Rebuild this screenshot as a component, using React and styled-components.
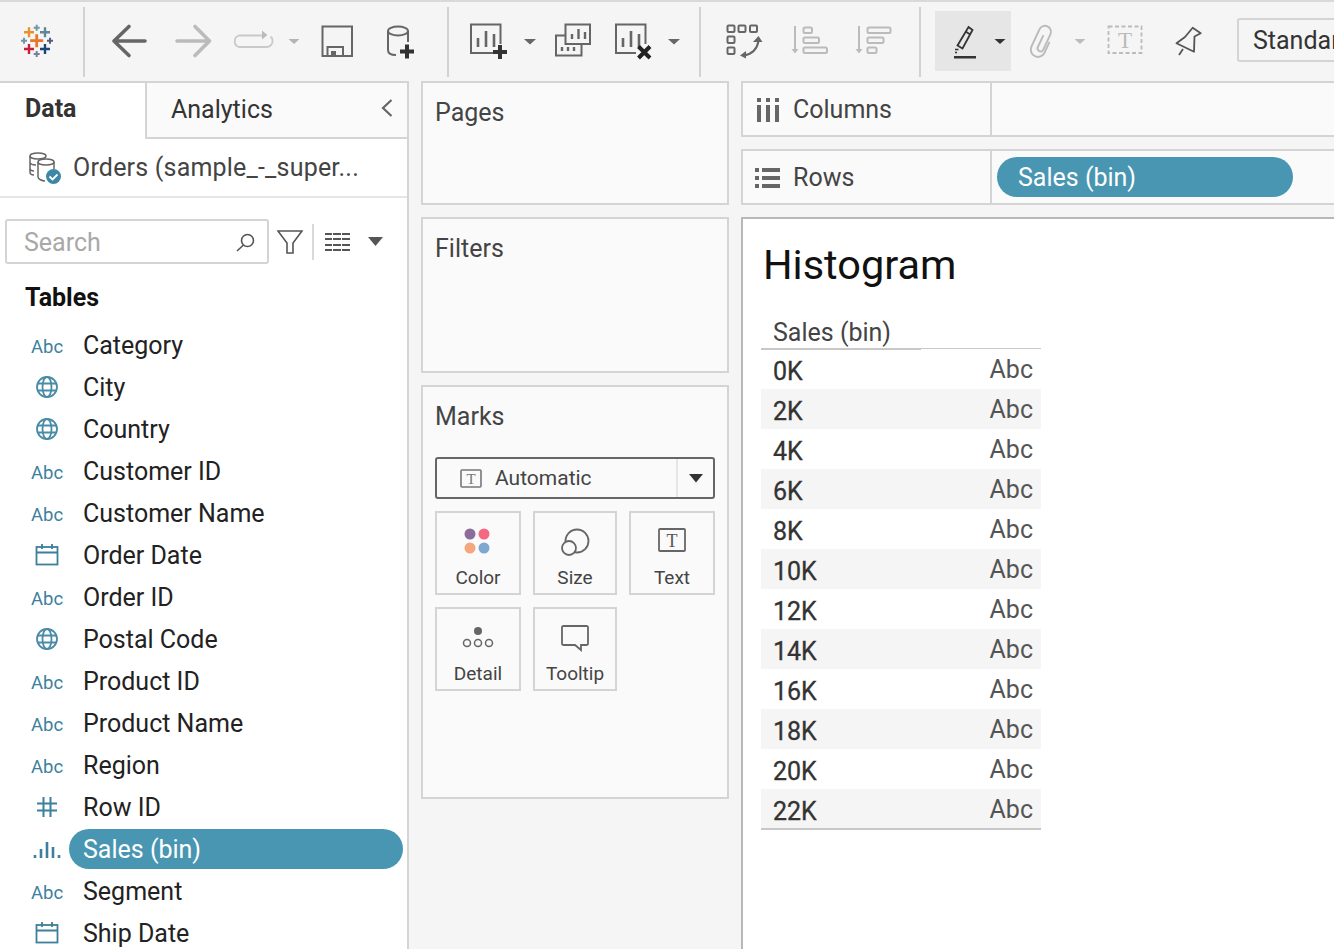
import React from "react";
import styled, { createGlobalStyle } from "styled-components";

const Global = createGlobalStyle`
  html, body { margin: 0; padding: 0; background: #f5f5f5; }
  * { box-sizing: border-box; }
  body { font-family: Roboto, Lato, sans-serif; color: #333; }
`;

const Page = styled.div`
  width: 1334px; height: 949px; overflow: hidden; background: #f5f5f5;
  display: flex; flex-direction: column;
`;
const Toolbar = styled.header`
  height: 81px; flex: none; display: flex; align-items: flex-start;
  border-top: 2px solid #d9d9d9; background: #f5f5f5; overflow: hidden;
`;
const Tool = styled.svg`
  display: block; flex: none; margin-top: -2px; height: 82px;
  width: ${p => p.$w}px;
`;
const ViewSelect = styled.div`
  flex: none; margin: 16px 0 0 3px; width: 160px; height: 44px;
  border: 2px solid #d4d4d4; border-radius: 3px; padding-left: 14px;
  font-size: 25px; line-height: 42px; color: #333; white-space: nowrap;
`;
const Body = styled.div`
  flex: 1; min-height: 0; display: flex;
`;
const Sidebar = styled.aside`
  width: 409px; flex: none; background: #fff; border-right: 2px solid #d4d4d4; border-top: 2px solid #d4d4d4;
  display: flex; flex-direction: column; overflow: hidden;
`;
const Tabs = styled.div`
  height: 56px; flex: none; display: flex;
`;
const TabActive = styled.div`
  width: 145px; padding: 11px 0 0 25px; font-size: 25px; font-weight: 700; color: #333; line-height: 30px;
`;
const TabIdle = styled.div`
  flex: 1; background: #fafafa; border-left: 2px solid #d4d4d4; border-bottom: 2px solid #d4d4d4;
  padding: 12px 14px 0 24px; font-size: 25px; line-height: 30px; color: #333;
  display: flex; justify-content: space-between;
`;
const Chevron = styled.svg`
  display: block; margin-top: 3px;
`;
const Source = styled.div`
  height: 59px; flex: none; display: flex; align-items: center; gap: 11px; padding: 0 0 0 28px;
  border-bottom: 2px solid #e6e6e6; font-size: 25px; letter-spacing: 0.2px; color: #444; white-space: nowrap;
`;
const SearchRow = styled.div`
  display: flex; align-items: center; padding: 21px 0 0 5px; height: 66px; flex: none;
`;
const SearchBox = styled.div`
  width: 264px; height: 45px; border: 2px solid #d4d4d4; border-radius: 3px; padding: 2px 12px 0 17px;
  display: flex; align-items: center; justify-content: space-between;
  font-size: 25px; color: #a8a8a8;
`;
const RowIcon = styled.svg`
  display: block; flex: none; margin-left: ${p => p.$ml || 0}px;
`;
const Sep = styled.div`
  width: 2px; height: 36px; background: #d9d9d9; margin: 0 11px 0 9px; flex: none;
`;
const SectionTitle = styled.div`
  font-size: 25px; font-weight: 700; color: #111; padding: 19px 0 0 25px; line-height: 30px; height: 60px; flex: none;
`;
const FieldList = styled.div`
  display: flex; flex-direction: column;
`;
const Field = styled.div`
  height: 42px; flex: none; display: flex; align-items: center;
  font-size: 25px; color: #222;
`;
const IconCell = styled.div`
  width: 69px; flex: none; padding-left: 25px; display: flex; justify-content: center;
  color: #3d7f9c;
`;
const AbcMark = styled.span`
  font-size: 18.5px; color: #3d7f9c; line-height: 1; padding-top: 4px; white-space: nowrap;
`;
const FieldName = styled.div`
  flex: 1; margin-right: 4px; height: 40px; line-height: 42px; padding-left: 14px; border-radius: 20px;
  white-space: nowrap;
  background: ${p => (p.$on ? "#4996b2" : "transparent")};
  color: ${p => (p.$on ? "#fff" : "#222")};
`;
const Middle = styled.div`
  width: 308px; flex: none; margin-left: 12px; display: flex; flex-direction: column; gap: 12px;
`;
const Card = styled.section`
  height: ${p => p.$h}px; flex: none; background: #fafafa; border: 2px solid #d4d4d4;
  padding: 15px 12px 0 12px; font-size: 25px; color: #444;
`;
const CardTitle = styled.div`
  line-height: 30px; height: 30px; color: #444;
`;
const MarkSelect = styled.div`
  margin-top: 25px; width: 280px; height: 42px; border: 2px solid #666; border-radius: 3px;
  display: flex; align-items: center; font-size: 21px; color: #444;
`;
const SelectLabel = styled.div`
  flex: 1; display: flex; align-items: center; gap: 13px; padding-left: 23px; height: 100%;
`;
const SelectCaret = styled.div`
  width: 37px; height: 100%; border-left: 2px solid #e6e6e6; display: flex; align-items: center; justify-content: center;
`;
const MarkGrid = styled.div`
  display: grid; grid-template-columns: 86px 84px 86px; grid-auto-rows: 84px; gap: 12px; margin-top: 12px;
`;
const MarkBtn = styled.div`
  border: 2px solid #d4d4d4; display: flex; flex-direction: column; align-items: center;
  font-size: 19px; color: #444; padding-top: 15px;
`;
const MarkIcon = styled.svg`
  display: block; height: 28px; flex: none;
`;
const MarkText = styled.span`
  margin-top: 10px; line-height: 24px;
`;
const Right = styled.div`
  flex: 1; min-width: 0; margin-left: 12px; display: flex; flex-direction: column; gap: 12px;
`;
const Shelf = styled.div`
  height: 56px; flex: none; display: flex; background: #fafafa;
  border: 2px solid #d4d4d4; border-right: 0;
`;
const ShelfLabel = styled.div`
  width: 249px; flex: none; border-right: 2px solid #d4d4d4; display: flex; align-items: center;
  font-size: 25px; color: #444; padding: 1px 0 0 ${p => p.$pl}px; gap: ${p => p.$gap}px;
`;
const ShelfBody = styled.div`
  flex: 1; padding: 6px 0 0 5px;
`;
const Pill = styled.div`
  width: 296px; height: 40px; border-radius: 20px; background: #4996b2; color: #fff;
  font-size: 25px; line-height: 42px; padding-left: 21px;
`;
const Viz = styled.main`
  flex: 1; min-height: 0; background: #fff; border-left: 2px solid #b8b8b8; border-top: 2px solid #b8b8b8;
  padding: 0 0 0 18px; overflow: hidden;
`;
const VizTitle = styled.h1`
  margin: 0; font-weight: 400; font-size: 41.5px; line-height: 50px; color: #111; padding: 21px 0 0 2px; height: 85px;
`;
const TableWrap = styled.div`
  width: 280px;
`;
const THead = styled.div`
  height: 45px; padding: 13px 0 0 12px; font-size: 25px; line-height: 32px; color: #444;
  border-bottom: 1px solid #c8c8c8; position: relative;
`;
const HeadAccent = styled.div`
  position: absolute; left: 0; bottom: -2px; width: 160px; height: 2px; background: #c8c8c8;
`;
const TRow = styled.div`
  height: 40px; display: flex; align-items: center; justify-content: space-between;
  padding: 0 8px 0 12px; font-size: 25px; background: ${p => (p.$alt ? "#f5f5f5" : "#fff")};
`;
const TKey = styled.span`
  color: #333; margin-top: 4px; -webkit-text-stroke: 0.3px #333;
`;
const TVal = styled.span`
  color: #555;
`;
const TFoot = styled.div`
  height: 2px; margin-top: -1px; background: #c8c8c8; position: relative;
`;

const Cross = ({ x, y, s, c, w = 2.4 }) => (
  <path d={`M${x - s} ${y}H${x + s}M${x} ${y - s}V${y + s}`} stroke={c} strokeWidth={w} fill="none" />
);
const Caret = ({ x, c = "#888", w = 12, y = 39 }) => (
  <path d={`M${x} ${y}h${w}l-${w / 2} ${w / 2 - 0.5}z`} fill={c} />
);
const I = ({ x, w, children }) => (
  <Tool $w={w} viewBox={`${x} 0 ${w} 82`} fill="none" aria-hidden>{children}</Tool>
);
const Bars = ({ x }) => (
  <path d={`M${x} 47v-9M${x + 8} 47v-16M${x + 16} 47v-13`} stroke="#666" strokeWidth="2.6" />
);
const Divider = ({ x }) => (
  <I x={x} w={2}><rect x={x} y="7" width="2" height="70" fill="#d2d2d2" /></I>
);

function TopBar() {
  return (
    <Toolbar>
      <I x={0} w={83}>
        <Cross x={36.7} y={40.7} s={6.5} c="#e8762c" w={2.8} />
        <Cross x={29} y={32.3} s={5} c="#eb912b" />
        <Cross x={45} y={32.3} s={5} c="#5b879b" />
        <Cross x={29} y={49} s={5} c="#c72037" />
        <Cross x={45} y={49} s={5} c="#1f447a" />
        <Cross x={36.7} y={27.7} s={3} c="#7099a6" w={2} />
        <Cross x={24} y={40.7} s={3} c="#7099a6" w={2} />
        <Cross x={50} y={40.7} s={3} c="#59597f" w={2} />
        <Cross x={36.7} y={54} s={3} c="#7c7ca5" w={2} />
      </I>
      <Divider x={83} />
      <I x={85} w={362}>
        <path d="M145 41H114M129 26.5L114 41L129 55.5" stroke="#666" strokeWidth="3.6" strokeLinecap="round" strokeLinejoin="round" />
        <path d="M177 41H209M195 26.5L209.5 41L195 55.5" stroke="#bbb" strokeWidth="3.6" strokeLinecap="round" strokeLinejoin="round" />
        <path d="M264 35.5H239a6 6 0 0 0 0 11.500H267a5.800 5.800 0 0 0 5.500-6.500 5 5 0 0 0-2-4" stroke="#c9c9c9" strokeWidth="1.800" />
        <path d="M262 30.500l5.500 4.500l-5.500 4.500z" fill="#bbb" />
        <Caret x={288.5} c="#b4b4b4" w={11} />
        <path d="M322.500 26.500h29.500v29.500h-29.500zM327.500 56v-9h15.500v9" stroke="#666" strokeWidth="2" />
        <rect x="331" y="51" width="5" height="5" fill="#666" />
        <ellipse cx="398" cy="31" rx="10" ry="4.500" stroke="#666" strokeWidth="2" />
        <path d="M388 31V50c0 3 3 5 8 5M408 31V42" stroke="#666" strokeWidth="2" />
        <Cross x={407} y={51.5} s={7} c="#333" w={4} />
      </I>
      <Divider x={447} />
      <I x={449} w={250}>
        <path d="M500.500 44V24.500H471V53h25" stroke="#666" strokeWidth="2" />
        <Bars x={478} />
        <Cross x={500} y={52} s={7} c="#333" w={4} />
        <Caret x={524} c="#666" />
        <rect x="565.500" y="24.500" width="24.500" height="19.500" stroke="#666" strokeWidth="2" />
        <path d="M572 39v-5M578.500 39v-10M585 39v-7" stroke="#666" strokeWidth="2.400" />
        <path d="M565 35.500h-9v20h25.500V44" stroke="#666" strokeWidth="2" />
        <path d="M562 51v-4M568 51v-4M574 51v-4" stroke="#666" strokeWidth="2.400" />
        <path d="M645.500 44V24.500H616V53h20" stroke="#666" strokeWidth="2" />
        <Bars x={623} />
        <path d="M638.500 46.500l11.500 11.500M650 46.500l-11.500 11.500" stroke="#222" strokeWidth="4" />
        <Caret x={668} c="#666" />
      </I>
      <Divider x={699} />
      <I x={701} w={218}>
        <g stroke="#666" strokeWidth="2">
          <rect x="727.500" y="25.500" width="7" height="6.500" rx="1" />
          <rect x="738.500" y="25.500" width="7" height="6.500" rx="1" />
          <rect x="750" y="25.500" width="7" height="6.500" rx="1" />
          <rect x="727.500" y="36.500" width="7" height="6.500" rx="1" />
          <rect x="727.500" y="47.500" width="7" height="6.500" rx="1" />
          <path d="M744 55.500C752 54 757 50 758.500 41" />
        </g>
        <path d="M753 42l5.500-6l4 6zM746 51l-6 4.500l6 3z" fill="#666" />
        <g stroke="#bbb" strokeWidth="2">
          <path d="M795 26v26" />
          <rect x="803.500" y="27.500" width="8.500" height="5.500" rx="1.500" />
          <rect x="803.500" y="37.500" width="15.500" height="5.500" rx="1.500" />
          <rect x="803.500" y="47.500" width="23.500" height="5.500" rx="1.500" />
          <path d="M859 26v26" />
          <rect x="867.500" y="27.500" width="23" height="5.500" rx="1.500" />
          <rect x="867.500" y="37.500" width="16" height="5.500" rx="1.500" />
          <rect x="867.500" y="47.500" width="9" height="5.500" rx="1.500" />
        </g>
        <path d="M791.500 49h7l-3.500 4.500zM855.500 49h7l-3.500 4.500z" fill="#bbb" />
      </I>
      <Divider x={919} />
      <I x={921} w={91}>
        <rect x="935" y="11" width="76" height="60" fill="#e6e6e6" />
        <path d="M968.500 27l4 3l-10 18.500l-5-3zM965.500 31.500l4 2.500" stroke="#333" strokeWidth="1.800" />
        <path d="M955 49.500h3.500M955 52.500h2" stroke="#333" strokeWidth="1.500" />
        <rect x="954" y="56" width="22" height="2.500" fill="#333" />
        <Caret x={994.5} c="#333" w={11} />
      </I>
      <I x={1012} w={222}>
        <g transform="translate(1042 41) rotate(25) scale(1.2)" stroke="#bbb" strokeWidth="1.600">
          <path d="M-1 -5V6a2.500 2.500 0 0 0 5 0V-8a5 5 0 0 0-10 0V8a6 6 0 0 0 12 0V-2" />
        </g>
        <Caret x={1074.5} c="#bbb" w={11} />
        <rect x="1108.500" y="26.500" width="33" height="26.500" stroke="#bbb" strokeWidth="1.800" strokeDasharray="4 2.500" />
        <text x="1125" y="48" textAnchor="middle" fontFamily="Liberation Serif, serif" fontSize="23" fill="#bbb">T</text>
        <path d="M1192.700 27.700L1200.700 33.300L1194.500 36.500L1194 51.700L1176.500 43.300L1185 37ZM1183 49L1179 55" stroke="#555" strokeWidth="1.800" strokeLinejoin="round" />
      </I>
      <ViewSelect>Standard</ViewSelect>
    </Toolbar>
  );
}

const Globe = () => (
  <svg width="24" height="24" viewBox="0 0 24 24" fill="none" stroke="#4a8ba6" strokeWidth="1.800" aria-hidden>
    <circle cx="12" cy="12" r="10" />
    <ellipse cx="12" cy="12" rx="4.500" ry="10" />
    <path d="M2.500 8.500h19M2.500 15.500h19" />
  </svg>
);
const Cal = () => (
  <svg width="24" height="24" viewBox="0 0 24 24" fill="none" stroke="#3d7f9c" strokeWidth="1.800" aria-hidden>
    <rect x="1.500" y="4" width="21" height="17.500" />
    <path d="M1.500 9.500h21M7 1v5M17 1v5" />
  </svg>
);
const Hash = () => (
  <svg width="24" height="24" viewBox="0 0 24 24" fill="none" stroke="#3d7f9c" strokeWidth="2" aria-hidden>
    <path d="M8.500 2v20M15.500 2v20M2 8.500h20M2 15.500h20" />
  </svg>
);
const BinIcon = () => (
  <svg width="30" height="24" viewBox="0 0 30 24" fill="none" stroke="#3d7f9c" strokeWidth="2.600" aria-hidden>
    <path d="M3 21v-3M9 21v-9M15 21V5M21 21v-11M27 21v-3" />
  </svg>
);

const fields = [
  ["abc", "Category"], ["globe", "City"], ["globe", "Country"], ["abc", "Customer ID"],
  ["abc", "Customer Name"], ["cal", "Order Date"], ["abc", "Order ID"], ["globe", "Postal Code"],
  ["abc", "Product ID"], ["abc", "Product Name"], ["abc", "Region"], ["hash", "Row ID"],
  ["bin", "Sales (bin)"], ["abc", "Segment"], ["cal", "Ship Date"],
];
const FieldIcon = ({ t }) => {
  if (t === "abc") return <AbcMark>Abc</AbcMark>;
  if (t === "globe") return <Globe />;
  if (t === "cal") return <Cal />;
  if (t === "hash") return <Hash />;
  return <BinIcon />;
};

function Data() {
  return (
    <Sidebar>
      <Tabs>
        <TabActive>Data</TabActive>
        <TabIdle>
          Analytics
          <Chevron width="12" height="20" viewBox="0 0 12 20" fill="none" stroke="#666" strokeWidth="2.200" aria-hidden>
            <path d="M10.500 2L2 10l8.500 8" />
          </Chevron>
        </TabIdle>
      </Tabs>
      <Source>
        <svg width="34" height="34" viewBox="0 0 34 34" fill="none" stroke="#666" strokeWidth="1.500" aria-hidden>
          <ellipse cx="10" cy="5" rx="8" ry="3" />
          <path d="M2 5v16c0 2 2 3 4 3M2 11c0 2 3 3 6 3M2 17c0 2 2 3 4 3" />
          <ellipse cx="18" cy="11" rx="8" ry="3" />
          <path d="M10 11v15c0 2 4 4 7 4M26 11v7" />
          <circle cx="25.500" cy="25.500" r="7.500" fill="#3d87a6" stroke="none" />
          <path d="M21.500 25.500l3 3l5-5" stroke="#fff" strokeWidth="1.800" />
        </svg>
        Orders (sample_-_super...
      </Source>
      <SearchRow>
        <SearchBox>
          Search
          <svg width="19" height="19" viewBox="0 0 19 19" fill="none" stroke="#555" strokeWidth="1.600" aria-hidden>
            <circle cx="11.500" cy="7.500" r="6" />
            <path d="M7.500 12L1 18" />
          </svg>
        </SearchBox>
        <RowIcon $ml={8} width="26" height="28" viewBox="0 0 26 28" fill="none" stroke="#555" strokeWidth="1.600" aria-hidden>
          <path d="M1 3h24L16 15v10h-6V15z" />
        </RowIcon>
        <Sep />
        <RowIcon width="25" height="18" viewBox="0 0 25 18" aria-hidden fill="#555">
          <path d="M0 0h25v2H0zM0 5h25v2H0zM0 11h25v2H0zM0 16h25v2H0z" />
          <path d="M7 0h1v18H7zM16 0h1v18h-1z" fill="#fff" />
        </RowIcon>
        <RowIcon $ml={18} width="15" height="9" viewBox="0 0 15 9" aria-hidden fill="#555">
          <path d="M0 0h15L7.500 9z" />
        </RowIcon>
      </SearchRow>
      <SectionTitle>Tables</SectionTitle>
      <FieldList>
        {fields.map(([t, n]) => (
          <Field key={n}>
            <IconCell><FieldIcon t={t} /></IconCell>
            <FieldName $on={n === "Sales (bin)"}>{n}</FieldName>
          </Field>
        ))}
      </FieldList>
    </Sidebar>
  );
}

function MarksCard() {
  return (
    <Card $h={414}>
      <CardTitle>Marks</CardTitle>
      <MarkSelect>
        <SelectLabel>
          <svg width="22" height="19" viewBox="0 0 22 19" fill="none" stroke="#777" strokeWidth="1.600" aria-hidden>
            <rect x="1" y="1" width="20" height="17" rx="1" />
            <text x="11" y="15" textAnchor="middle" fontFamily="Liberation Serif, serif" fontSize="15" fill="#777" stroke="none">T</text>
          </svg>
          Automatic
        </SelectLabel>
        <SelectCaret>
          <svg width="14" height="9" viewBox="0 0 14 9" aria-hidden><path d="M0 0h14L7 8.500z" fill="#333" /></svg>
        </SelectCaret>
      </MarkSelect>
      <MarkGrid>
        <MarkBtn>
          <MarkIcon width="28" viewBox="0 0 28 28" aria-hidden>
            <circle cx="6" cy="6" r="5.500" fill="#8a6d9a" />
            <circle cx="20" cy="6" r="5.500" fill="#f4697f" />
            <circle cx="6" cy="20" r="5.500" fill="#f4a67c" />
            <circle cx="20" cy="20" r="5.500" fill="#7fa8d0" />
          </MarkIcon>
          <MarkText>Color</MarkText>
        </MarkBtn>
        <MarkBtn>
          <MarkIcon width="30" viewBox="0 0 30 28" fill="none" stroke="#666" strokeWidth="1.800" aria-hidden>
            <circle cx="17" cy="13" r="11.500" />
            <circle cx="9" cy="20" r="7" fill="#fafafa" />
          </MarkIcon>
          <MarkText>Size</MarkText>
        </MarkBtn>
        <MarkBtn>
          <MarkIcon width="28" viewBox="0 0 28 28" fill="none" stroke="#666" strokeWidth="1.800" aria-hidden>
            <rect x="1" y="1" width="26" height="22" rx="1" />
            <text x="14" y="19" textAnchor="middle" fontFamily="Liberation Serif, serif" fontSize="18" fill="#555" stroke="none">T</text>
          </MarkIcon>
          <MarkText>Text</MarkText>
        </MarkBtn>
        <MarkBtn>
          <MarkIcon width="32" viewBox="0 0 32 28" fill="none" stroke="#666" strokeWidth="1.500" aria-hidden>
            <circle cx="16" cy="7" r="4" fill="#666" stroke="none" />
            <circle cx="5" cy="19" r="3.500" />
            <circle cx="16" cy="19" r="3.500" />
            <circle cx="27" cy="19" r="3.500" />
          </MarkIcon>
          <MarkText>Detail</MarkText>
        </MarkBtn>
        <MarkBtn>
          <MarkIcon width="30" viewBox="0 0 30 28" fill="none" stroke="#666" strokeWidth="1.800" aria-hidden>
            <path d="M3 2h24a1.500 1.500 0 0 1 1 1v17a1.500 1.500 0 0 1-1 1H21v5l-6-5H3a1.500 1.500 0 0 1-1-1V3a1.500 1.500 0 0 1 1-1z" />
          </MarkIcon>
          <MarkText>Tooltip</MarkText>
        </MarkBtn>
      </MarkGrid>
    </Card>
  );
}

const bins = ["0K", "2K", "4K", "6K", "8K", "10K", "12K", "14K", "16K", "18K", "20K", "22K"];

export default function App() {
  return (
    <Page>
      <Global />
      <TopBar />
      <Body>
        <Data />
        <Middle>
          <Card $h={124}><CardTitle>Pages</CardTitle></Card>
          <Card $h={156}><CardTitle>Filters</CardTitle></Card>
          <MarksCard />
        </Middle>
        <Right>
          <Shelf>
            <ShelfLabel $pl={14} $gap={14}>
              <svg width="22" height="24" viewBox="0 0 22 24" fill="#666" aria-hidden>
                <path d="M0 0h4v4H0zM9 0h4v4H9zM18 0h4v4h-4zM0 7h4v17H0zM9 7h4v17H9zM18 7h4v17h-4z" />
              </svg>
              Columns
            </ShelfLabel>
            <ShelfBody />
          </Shelf>
          <Shelf>
            <ShelfLabel $pl={12} $gap={13}>
              <svg width="25" height="20" viewBox="0 0 25 20" fill="#666" aria-hidden>
                <path d="M0 0h4v4H0zM7 0h18v4H7zM0 8h4v4H0zM7 8h18v4H7zM0 16h4v4H0zM7 16h18v4H7z" />
              </svg>
              Rows
            </ShelfLabel>
            <ShelfBody><Pill>Sales (bin)</Pill></ShelfBody>
          </Shelf>
          <Viz>
            <VizTitle>Histogram</VizTitle>
            <TableWrap>
              <THead>Sales (bin)<HeadAccent /></THead>
              {bins.map((b, i) => (
                <TRow key={b} $alt={i % 2 === 1}>
                  <TKey>{b}</TKey>
                  <TVal>Abc</TVal>
                </TRow>
              ))}
              <TFoot />
            </TableWrap>
          </Viz>
        </Right>
      </Body>
    </Page>
  );
}
